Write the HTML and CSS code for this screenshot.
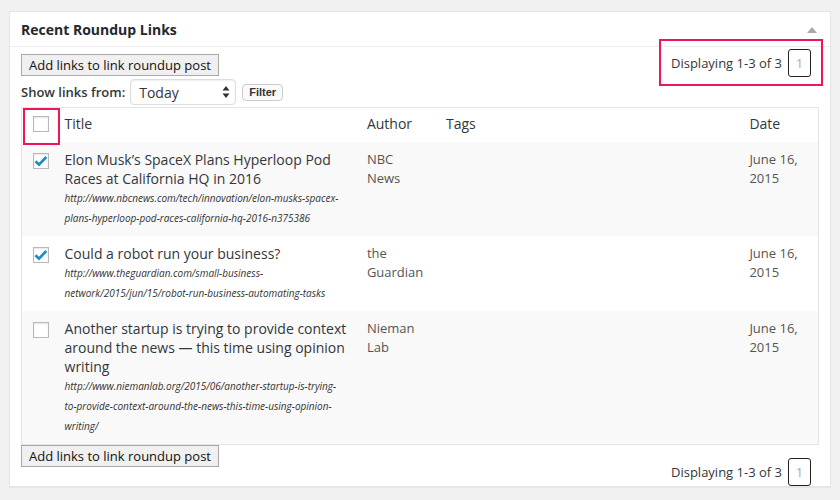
FILE: index.html
```html
<!DOCTYPE html>
<html>
<head>
<meta charset="utf-8">
<link rel="stylesheet" href="styles.css">
</head>
<body>
<div class="postbox">
  <div class="hndle">
    <h2>Recent Roundup Links</h2>
    <span class="toggle"></span>
  </div>
  <div class="inside">
    <div class="tablenav top">
      <div class="actions">
        <button class="add-btn">Add links to link roundup post</button>
        <div class="filter-row">
          <label class="filter-label">Show links from:</label>
          <div class="select">
            <span>Today</span>
            <svg class="arrows" width="8" height="12" viewBox="0 0 8 12"><path d="M4 0 L7.5 4.5 H0.5 Z M4 12 L7.5 7.5 H0.5 Z" fill="#333"/></svg>
          </div>
          <button class="filter-btn">Filter</button>
        </div>
      </div>
      <div class="pagination">
        <span class="displaying">Displaying 1-3 of 3</span>
        <span class="page">1</span>
      </div>
    </div>

    <table class="links">
      <colgroup>
        <col class="c-cb"><col class="c-title"><col class="c-author"><col class="c-tags"><col class="c-date">
      </colgroup>
      <thead>
        <tr>
          <th class="cb"><span class="checkbox"></span></th>
          <th>Title</th>
          <th>Author</th>
          <th>Tags</th>
          <th>Date</th>
        </tr>
      </thead>
      <tbody>
        <tr class="alt">
          <td class="cb"><span class="checkbox checked"><svg width="14" height="12" viewBox="0 0 14 12"><path d="M1.5 6.2 L5 9.6 L12.3 2" fill="none" stroke="#1e8cbe" stroke-width="2.6"/></svg></span></td>
          <td><div class="title">Elon Musk’s SpaceX Plans Hyperloop Pod Races at California HQ in 2016</div><div class="url">http://www.nbcnews.com/tech/innovation/elon-musks-spacex-plans-hyperloop-pod-races-california-hq-2016-n375386</div></td>
          <td>NBC News</td>
          <td></td>
          <td>June 16, 2015</td>
        </tr>
        <tr>
          <td class="cb"><span class="checkbox checked"><svg width="14" height="12" viewBox="0 0 14 12"><path d="M1.5 6.2 L5 9.6 L12.3 2" fill="none" stroke="#1e8cbe" stroke-width="2.6"/></svg></span></td>
          <td><div class="title">Could a robot run your business?</div><div class="url">http://www.theguardian.com/small-business-network/2015/jun/15/robot-run-business-automating-tasks</div></td>
          <td>the Guardian</td>
          <td></td>
          <td>June 16, 2015</td>
        </tr>
        <tr class="alt">
          <td class="cb"><span class="checkbox"></span></td>
          <td><div class="title">Another startup is trying to provide context around the news — this time using opinion writing</div><div class="url">http://www.niemanlab.org/2015/06/another-startup-is-trying-to-provide-context-around-the-news-this-time-using-opinion-writing/</div></td>
          <td>Nieman Lab</td>
          <td></td>
          <td>June 16, 2015</td>
        </tr>
      </tbody>
    </table>

    <div class="tablenav bottom">
      <button class="add-btn">Add links to link roundup post</button>
      <div class="pagination">
        <span class="displaying">Displaying 1-3 of 3</span>
        <span class="page">1</span>
      </div>
    </div>
  </div>
  <div class="highlight hl-pager"></div>
  <div class="highlight hl-cb"></div>
</div>
</body>
</html>
```

FILE: styles.css
```css
html, body {
  margin: 0;
  padding: 0;
}
body {
  background: #f1f1f1;
  font-family: "Open Sans", "Liberation Sans", sans-serif;
  color: #32373c;
  width: 840px;
  height: 500px;
  overflow: hidden;
}
.postbox {
  position: relative;
  margin: 11px 0 0 9px;
  width: 820px;
  background: #fff;
  border: 1px solid #e5e5e5;
  box-shadow: 0 1px 1px rgba(0,0,0,0.04);
}
.hndle {
  display: flex;
  align-items: center;
  justify-content: space-between;
  height: 34px;
  border-bottom: 1px solid #eee;
  padding: 0 13px 0 11px;
}
.hndle h2 {
  margin: 0;
  font-size: 14px;
  font-weight: 700;
  color: #23282d;
}
.toggle {
  width: 0;
  height: 0;
  border-left: 5px solid transparent;
  border-right: 5px solid transparent;
  border-bottom: 6px solid #aaa;
  margin-top: 2px;
}
.inside {
  padding: 0 11px 0 11px;
}
.tablenav {
  display: flex;
  justify-content: space-between;
  align-items: flex-start;
}
.actions {
  padding-top: 7px;
}
.add-btn {
  display: block;
  height: 22px;
  margin: 0;
  padding: 0 7px;
  font-family: "Open Sans", "Liberation Sans", sans-serif;
  font-size: 13px;
  line-height: 20px;
  color: #111;
  background: #f0f0f0;
  border: 1px solid #a9a9a9;
  border-radius: 0;
}
.filter-row {
  display: flex;
  align-items: center;
  margin-top: 3px;
  height: 26px;
}
.filter-label {
  font-size: 13px;
  font-weight: 600;
  color: #32373c;
  margin-right: 5px;
}
.select {
  display: flex;
  align-items: center;
  justify-content: space-between;
  box-sizing: border-box;
  width: 106px;
  height: 26px;
  padding: 0 5px 0 8px;
  border: 1px solid #ddd;
  border-radius: 4px;
  box-shadow: inset 0 1px 2px rgba(0,0,0,0.07);
  font-size: 14px;
  color: #32373c;
}
.arrows {
  display: block;
}
.filter-btn {
  margin: 0 0 0 6px;
  box-sizing: border-box;
  height: 17px;
  width: 41px;
  padding: 0;
  font-family: "Liberation Sans", Arial, sans-serif;
  font-size: 11px;
  font-weight: 700;
  color: #333;
  background: #fafafa;
  border: 1px solid #ccc;
  border-radius: 4px;
  line-height: 15px;
}
.pagination {
  display: flex;
  align-items: center;
  margin-top: 2px;
  margin-right: 8px;
}
.tablenav.bottom .pagination {
  margin-top: 13px;
}
.displaying {
  font-size: 13px;
  color: #32373c;
  margin-right: 6px;
}
.page {
  box-sizing: border-box;
  width: 23px;
  height: 28px;
  border: 1px solid #222;
  border-radius: 3px;
  font-size: 13px;
  color: #aaa;
  display: flex;
  align-items: center;
  justify-content: center;
}
.links {
  margin-top: 2px;
  width: 798px;
  border: 1px solid #e5e5e5;
  border-collapse: collapse;
  table-layout: fixed;
}
.c-cb { width: 33px; }
.c-title { width: 302px; }
.c-author { width: 79px; }
.c-tags { width: 303px; }
.c-date { width: 79px; }
.links th {
  text-align: left;
  font-weight: 400;
  font-size: 14px;
  color: #32373c;
  height: 34px;
  padding: 0 10px 2px;
  box-sizing: border-box;
  vertical-align: middle;
}
.links th.cb {
  padding: 0 0 1px 11px;
}
.links td {
  vertical-align: top;
  padding: 8px 10px;
  font-size: 13px;
  line-height: 19px;
  color: #555;
}
.links td.cb {
  padding: 11px 0 0 11px;
}
.links tr.alt td {
  background: #f9f9f9;
}
.checkbox {
  display: flex;
  align-items: center;
  justify-content: center;
  box-sizing: border-box;
  width: 16px;
  height: 16px;
  border: 1px solid #b4b9be;
  background: #fff;
  box-shadow: inset 0 1px 2px rgba(0,0,0,0.1);
}
.checkbox svg {
  display: block;
}
.title {
  font-size: 14px;
  line-height: 19px;
  color: #32373c;
}
.url {
  font-size: 10px;
  line-height: 20px;
  font-style: italic;
  color: #333;
}
.highlight {
  position: absolute;
  border: 2px solid #f0145a;
  box-sizing: border-box;
}
.hl-pager {
  left: 649px;
  top: 27px;
  width: 164px;
  height: 47px;
}
.hl-cb {
  left: 13px;
  top: 96px;
  width: 37px;
  height: 37px;
}
```
